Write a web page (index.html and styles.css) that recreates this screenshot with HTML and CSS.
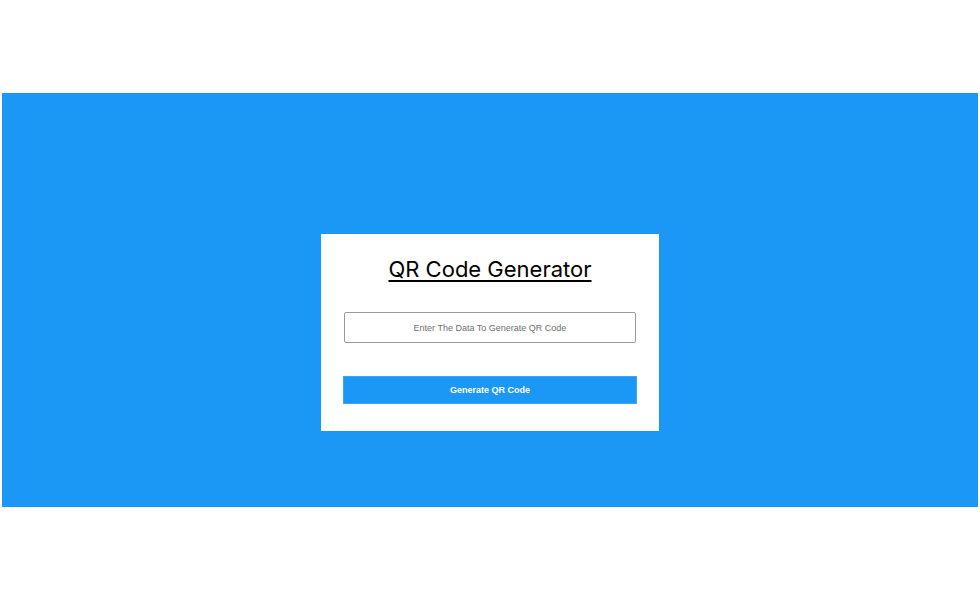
FILE: index.html
```html
<!DOCTYPE html>
<html>
<head>
<meta charset="utf-8">
<link rel="stylesheet" href="styles.css">
</head>
<body>
<div class="page">
  <section class="hero">
    <div class="card">
      <h1 class="title">QR Code Generator</h1>
      <input class="field" type="text" placeholder="Enter The Data To Generate QR Code">
      <button class="btn">Generate QR Code</button>
    </div>
  </section>
</div>
</body>
</html>
```
FILE: styles.css
```css
html, body {
  margin: 0;
  padding: 0;
  background: #ffffff;
}
.page {
  padding: 93px 2px 0;
}
.hero {
  background: #1b98f5;
  height: 414px;
  box-sizing: border-box;
  padding-top: 141px;
  display: flex;
  justify-content: center;
  align-items: flex-start;
}
.card {
  width: 338px;
  height: 197px;
  box-sizing: border-box;
  background: #ffffff;
  padding: 21px 22px 0;
  display: flex;
  flex-direction: column;
  align-items: center;
}
.title {
  margin: 0;
  font-family: "Inter", "Liberation Sans", sans-serif;
  font-weight: 400;
  font-size: 22px;
  line-height: 28px;
  color: #000;
  text-decoration: underline;
  text-underline-offset: 3px;
  text-decoration-thickness: 1.5px;
}
.field {
  margin-top: 29px;
  width: 292px;
  height: 31px;
  box-sizing: border-box;
  border: 1px solid #9a9a9a;
  border-radius: 2px;
  padding: 0 8px;
  font-family: "Liberation Sans", Arial, sans-serif;
  font-size: 9px;
  text-align: center;
  outline: none;
}
.field::placeholder {
  color: #6f6f6f;
}
.btn {
  margin-top: 33px;
  width: 294px;
  height: 28px;
  box-sizing: border-box;
  border: 1px solid #3aa6f7;
  background: #1b98f5;
  color: #fff;
  font-family: "Liberation Sans", Arial, sans-serif;
  font-weight: bold;
  font-size: 9px;
  cursor: pointer;
}
```
